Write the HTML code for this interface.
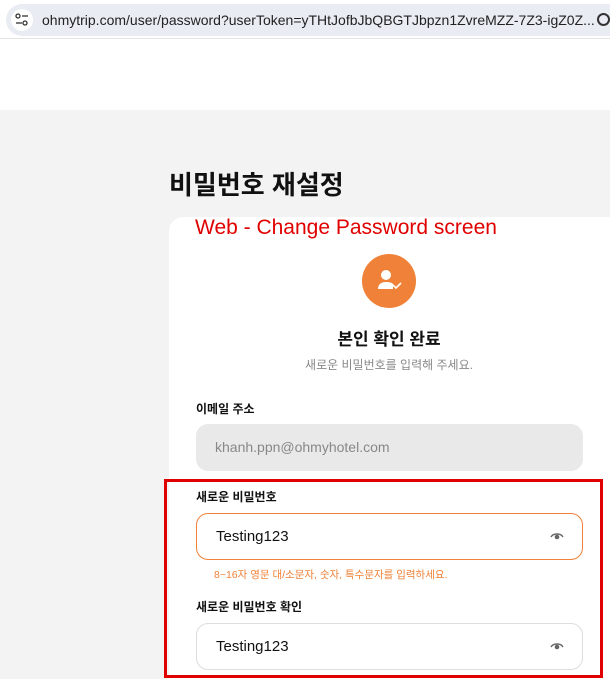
<!DOCTYPE html>
<html><head><meta charset="utf-8"><style>
*{margin:0;padding:0;box-sizing:border-box}
html,body{width:610px;height:679px;overflow:hidden}
body{background:#f3f3f3;font-family:"Liberation Sans","Noto Sans CJK KR",sans-serif;position:relative}
.abs{position:absolute}
.bar{left:0;top:0;width:610px;height:39px;background:#fff;border-bottom:1px solid #e3e3e3}
.pill{left:6px;top:4px;width:620px;height:32px;border-radius:16px;background:#e9ecf3}
.hdr{left:0;top:39px;width:610px;height:71px;background:#fff}
.card{left:169px;top:217px;width:460px;height:462px;background:#fff;border-radius:14px 14px 0 0}
.lbl{font-size:12px;font-weight:bold;color:#111;left:196px}
.inp{left:196px;width:387px;height:47px;border-radius:12px;font-size:15px;padding-left:19px;line-height:45px;color:#111}
.eye{right:18px;top:17px}
</style></head><body>
<div class="abs bar"></div>
<div class="abs pill"></div>
<div class="abs" style="left:11px;top:9px;width:22px;height:22px;border-radius:11px;background:#fff"></div>
<svg class="abs" style="left:14px;top:13px" width="16" height="14" viewBox="0 0 16 14"><circle cx="4" cy="3" r="2" fill="none" stroke="#333" stroke-width="1.3"/><line x1="8" y1="3" x2="14" y2="3" stroke="#333" stroke-width="1.3"/><circle cx="11" cy="10" r="2" fill="none" stroke="#333" stroke-width="1.3"/><line x1="2" y1="10" x2="8" y2="10" stroke="#333" stroke-width="1.3"/></svg>
<div class="abs" style="left:42px;top:12px;font-size:14px;color:#222;white-space:nowrap">ohmytrip.com/user/password?userToken=yTHtJofbJbQBGTJbpzn1ZvreMZZ-7Z3-igZ0Z...</div>
<div class="abs" style="left:597px;top:13px;width:13px;height:13px;border-radius:7px;border:2px solid #333"></div>
<div class="abs hdr"></div>
<div class="abs" style="left:169px;top:165px;font-size:26px;font-weight:bold;color:#111">비밀번호 재설정</div>
<div class="abs card"></div>
<div class="abs" style="left:195px;top:216px;font-size:21px;color:#e00000">Web - Change Password screen</div>
<div class="abs" style="left:362px;top:254px;width:54px;height:54px;border-radius:27px;background:#ef8238"></div>
<svg class="abs" style="left:376px;top:268px" width="28" height="26" viewBox="0 0 28 26"><circle cx="10" cy="7" r="5" fill="#fff"/><path d="M2 21c0-5 4-7 8-7s6 1 7 2v5z" fill="#fff"/><path d="M17 17l3 3 5-5" stroke="#fff" stroke-width="1.6" fill="none"/></svg>
<div class="abs" style="left:289px;top:325px;width:200px;text-align:center;font-size:17px;font-weight:bold;color:#111">본인 확인 완료</div>
<div class="abs" style="left:269px;top:356px;width:240px;text-align:center;font-size:12px;color:#888">새로운 비밀번호를 입력해 주세요.</div>
<div class="abs lbl" style="top:400px">이메일 주소</div>
<div class="abs inp" style="top:424px;background:#e9e9e9;color:#888;font-size:14px;line-height:47px">khanh.ppn@ohmyhotel.com</div>
<div class="abs lbl" style="top:488px">새로운 비밀번호</div>
<div class="abs inp" style="top:513px;border:1px solid #ef8238">Testing123<svg class="abs eye" width="14" height="10" viewBox="0 0 14 10"><path d="M1 6C3 2 11 2 13 6" stroke="#666" stroke-width="1.4" fill="none"/><circle cx="7" cy="6" r="2.3" fill="#666"/></svg></div>
<div class="abs" style="left:214px;top:567px;font-size:10.5px;color:#ef8238">8~16자 영문 대/소문자, 숫자, 특수문자를 입력하세요.</div>
<div class="abs lbl" style="top:598px">새로운 비밀번호 확인</div>
<div class="abs inp" style="top:623px;border:1px solid #ddd">Testing123<svg class="abs eye" width="14" height="10" viewBox="0 0 14 10"><path d="M1 6C3 2 11 2 13 6" stroke="#666" stroke-width="1.4" fill="none"/><circle cx="7" cy="6" r="2.3" fill="#666"/></svg></div>
<div class="abs" style="left:164px;top:479px;width:439px;height:199px;border:3px solid #e00000"></div>
</body></html>
